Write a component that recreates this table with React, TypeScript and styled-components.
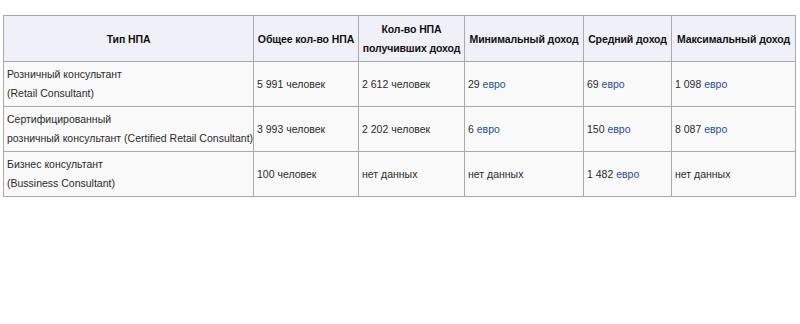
import styled, { createGlobalStyle } from "styled-components";

const GlobalStyle = createGlobalStyle`
  body {
    margin: 0;
    background: #fff;
    font-family: "Liberation Sans", Arial, sans-serif;
  }
`;

const Page = styled.div`
  padding: 15px 0 0 3px;
`;

const Table = styled.table`
  width: 792px;
  table-layout: fixed;
  border-collapse: collapse;
  background: #f9f9f9;
  border: 1px solid #aaa;
  font-size: 10.5px;
  line-height: 19px;
  color: #2a2a2a;
`;

const HeadCell = styled.th`
  background: #f0f0f9;
  border: 1px solid #aaa;
  padding: 4px 2px 3px;
  font-weight: bold;
  text-align: center;
  vertical-align: middle;
  white-space: nowrap;
  letter-spacing: -0.1px;
  color: #111;
`;

const Cell = styled.td`
  border: 1px solid #aaa;
  padding: 3px;
  vertical-align: middle;
  white-space: nowrap;
`;

const Euro = styled.a`
  color: #2a4ea0;
  text-decoration: none;
`;

const columns = [250, 105, 106, 119, 88, 124];

const headers = [
  ["Тип НПА"],
  ["Общее кол-во НПА"],
  ["Кол-во НПА", "получивших доход"],
  ["Минимальный доход"],
  ["Средний доход"],
  ["Максимальный доход"],
];

type Value = { text: string; euro?: boolean };

const rows: { type: string[]; values: Value[] }[] = [
  {
    type: ["Розничный консультант", "(Retail Consultant)"],
    values: [
      { text: "5 991 человек" },
      { text: "2 612 человек" },
      { text: "29", euro: true },
      { text: "69", euro: true },
      { text: "1 098", euro: true },
    ],
  },
  {
    type: [
      "Сертифицированный",
      "розничный консультант (Certified Retail Consultant)",
    ],
    values: [
      { text: "3 993 человек" },
      { text: "2 202 человек" },
      { text: "6", euro: true },
      { text: "150", euro: true },
      { text: "8 087", euro: true },
    ],
  },
  {
    type: ["Бизнес консультант", "(Bussiness Consultant)"],
    values: [
      { text: "100 человек" },
      { text: "нет данных" },
      { text: "нет данных" },
      { text: "1 482", euro: true },
      { text: "нет данных" },
    ],
  },
];

const App = () => {
  return (
    <Page>
      <GlobalStyle />
      <Table>
        <colgroup>
          {columns.map((w, i) => (
            <col key={i} style={{ width: w }} />
          ))}
        </colgroup>
        <thead>
          <tr>
            {headers.map((lines, i) => (
              <HeadCell key={i}>
                {lines.map((l, j) => (
                  <div key={j}>{l}</div>
                ))}
              </HeadCell>
            ))}
          </tr>
        </thead>
        <tbody>
          {rows.map((row, i) => (
            <tr key={i}>
              <Cell>
                {row.type.map((l, j) => (
                  <div key={j}>{l}</div>
                ))}
              </Cell>
              {row.values.map((v, j) => (
                <Cell key={j}>
                  {v.text}
                  {v.euro && (
                    <>
                      {" "}
                      <Euro href="#">евро</Euro>
                    </>
                  )}
                </Cell>
              ))}
            </tr>
          ))}
        </tbody>
      </Table>
    </Page>
  );
};

export default App;
